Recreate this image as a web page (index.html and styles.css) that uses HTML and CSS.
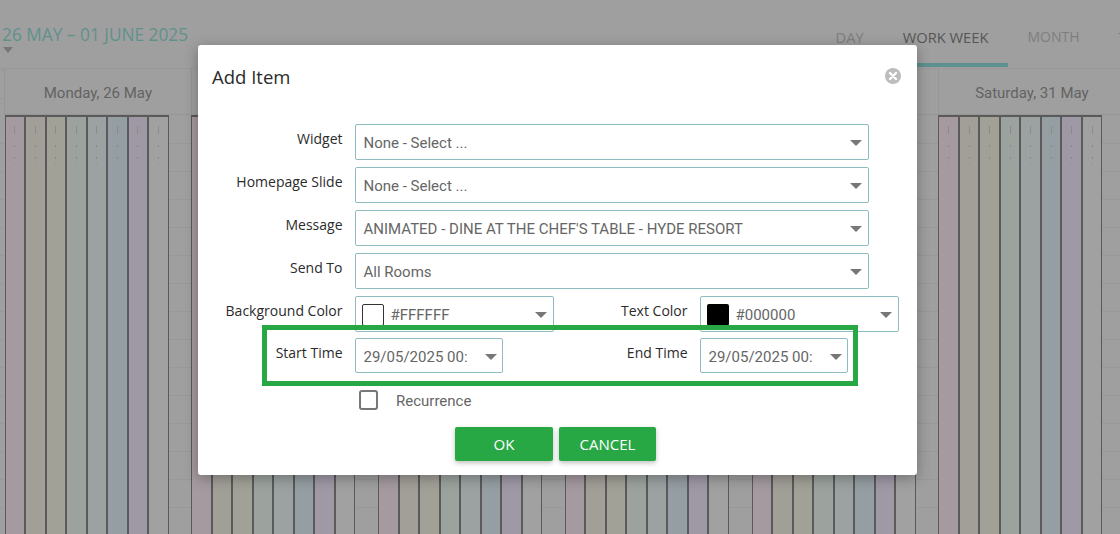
FILE: index.html
```html
<!DOCTYPE html>
<html lang="en">
<head>
<meta charset="utf-8">
<title>Add Item</title>
<link rel="stylesheet" href="styles.css">
</head>
<body>
<div class="page">
  <header class="topbar">
    <div class="range">
      <span class="range-text">26 MAY – 01 JUNE 2025</span>
      <span class="range-caret"></span>
    </div>
    <nav class="tabs">
      <span class="tab">DAY</span>
      <span class="tab tab-active">WORK WEEK</span>
      <span class="tab tab-month">MONTH</span>
      <span class="tab">TIMELINE</span>
    </nav>
  </header>
  <section class="week">
    <div class="day-head">Monday, 26 May</div>
    <div class="day-head"></div>
    <div class="day-head"></div>
    <div class="day-head"></div>
    <div class="day-head"></div>
    <div class="day-head">Saturday, 31 May</div>
    <div class="day"><i class="s s1"></i><i class="s s2"></i><i class="s s3"></i><i class="s s4"></i><i class="s s5"></i><i class="s s6"></i><i class="s s7"></i><i class="s s8"></i></div>
    <div class="day"><i class="s s1"></i><i class="s s2"></i><i class="s s3"></i><i class="s s4"></i><i class="s s5"></i><i class="s s6"></i><i class="s s7"></i><i class="s s8"></i></div>
    <div class="day"><i class="s s1"></i><i class="s s2"></i><i class="s s3"></i><i class="s s4"></i><i class="s s5"></i><i class="s s6"></i><i class="s s7"></i><i class="s s8"></i></div>
    <div class="day"><i class="s s1"></i><i class="s s2"></i><i class="s s3"></i><i class="s s4"></i><i class="s s5"></i><i class="s s6"></i><i class="s s7"></i><i class="s s8"></i></div>
    <div class="day"><i class="s s1"></i><i class="s s2"></i><i class="s s3"></i><i class="s s4"></i><i class="s s5"></i><i class="s s6"></i><i class="s s7"></i><i class="s s8"></i></div>
    <div class="day"><i class="s s1"></i><i class="s s2"></i><i class="s s3"></i><i class="s s4"></i><i class="s s5"></i><i class="s s6"></i><i class="s s7"></i><i class="s s8"></i></div>
  </section>

  <div class="modal">
    <div class="modal-head">
      <h2 class="modal-title">Add Item</h2>
      <svg class="close" viewBox="0 0 16 16" width="16" height="16" aria-label="Close">
        <circle cx="8" cy="8" r="8" fill="#bdbdbd"/>
        <path d="M5 5l6 6M11 5l-6 6" stroke="#fff" stroke-width="2.4" stroke-linecap="round"/>
      </svg>
    </div>
    <form class="form">
      <div class="row">
        <label class="label">Widget</label>
        <div class="select select-full"><span class="value">None - Select ...</span><span class="caret"></span></div>
      </div>
      <div class="row">
        <label class="label">Homepage Slide</label>
        <div class="select select-full"><span class="value">None - Select ...</span><span class="caret"></span></div>
      </div>
      <div class="row">
        <label class="label">Message</label>
        <div class="select select-full"><span class="value">ANIMATED - DINE AT THE CHEF'S TABLE - HYDE RESORT</span><span class="caret"></span></div>
      </div>
      <div class="row">
        <label class="label">Send To</label>
        <div class="select select-full"><span class="value">All Rooms</span><span class="caret"></span></div>
      </div>
      <div class="row row-split">
        <label class="label">Background Color</label>
        <div class="select select-half"><span class="swatch swatch-white"></span><span class="value">#FFFFFF</span><span class="caret"></span></div>
        <label class="label">Text Color</label>
        <div class="select select-half"><span class="swatch swatch-black"></span><span class="value">#000000</span><span class="caret"></span></div>
      </div>
      <div class="row row-split row-time">
        <label class="label">Start Time</label>
        <div class="select select-time"><span class="value">29/05/2025 00:</span><span class="caret"></span></div>
        <label class="label">End Time</label>
        <div class="select select-time"><span class="value">29/05/2025 00:</span><span class="caret"></span></div>
      </div>
      <div class="recurrence">
        <span class="checkbox"></span>
        <span class="recurrence-text">Recurrence</span>
      </div>
      <div class="actions">
        <button type="button" class="btn btn-ok">OK</button>
        <button type="button" class="btn btn-cancel">CANCEL</button>
      </div>
    </form>
    <div class="highlight"></div>
  </div>
</div>
</body>
</html>
```
FILE: styles.css
```css
* { box-sizing: border-box; }
html, body { margin: 0; padding: 0; }
body {
  width: 1120px;
  height: 534px;
  overflow: hidden;
  background: #9f9f9f;
  font-family: "Roboto", "Liberation Sans", sans-serif;
}
.page {
  position: relative;
  width: 1120px;
  height: 534px;
  overflow: hidden;
  background: #9f9f9f;
}

/* top bar */
.topbar {
  display: flex;
  justify-content: space-between;
  height: 69px;
  border-bottom: 1px solid #999;
  white-space: nowrap;
}
.range {
  display: flex;
  flex-direction: column;
  padding: 23px 0 0 2px;
}
.range-text {
  font-family: "Open Sans", sans-serif;
  font-size: 17.3px;
  line-height: 23px;
  color: #5f918c;
}
.range-caret {
  width: 0;
  height: 0;
  margin: 1px 0 0 1px;
  border-left: 5px solid transparent;
  border-right: 5px solid transparent;
  border-top: 6px solid #777;
}
.tabs {
  display: flex;
  flex: none;
  width: 304px;
  height: 68px;
  overflow: hidden;
}
.tab {
  flex: none;
  height: 68px;
  padding: 27px 19.5px 0;
  font-family: "Open Sans", sans-serif;
  font-size: 14.7px;
  line-height: 20px;
  color: #7e7e7e;
}
.tab-active {
  color: #565656;
  border-bottom: 4px solid #5c928d;
  height: 67px;
}
.tab-month {
  font-size: 14px;
}

/* calendar */
.week {
  display: grid;
  grid-template-columns: repeat(6, 186.8px);
  grid-template-rows: 46px 1fr;
  height: 465px;
  padding-left: 4px;
  background-image: repeating-linear-gradient(to bottom, transparent 0, transparent 27px, #989898 27px, #989898 28px);
  background-position: 0 47px;
}
.day-head {
  display: flex;
  align-items: center;
  justify-content: center;
  padding-top: 2px;
  background: #9f9f9f;
  border-left: 1px solid #969696;
  border-bottom: 1px solid #969696;
  font-size: 15px;
  white-space: nowrap;
  color: #636363;
}
.day {
  display: flex;
  padding-left: 0.5px;
  min-height: 0;
}
.s {
  display: block;
  width: 20.5px;
  border: 1px solid #5a5a5a;
  border-width: 2px 1px 0;
  background-repeat: no-repeat;
  background-image:
    linear-gradient(#8b8b8b, #8b8b8b),
    linear-gradient(#888, #888),
    linear-gradient(#888, #888),
    linear-gradient(#8e8e8e, #8e8e8e);
  background-size: 1px 8px, 1px 2px, 1px 2px, 1px 1px;
  background-position: 50% 9px, 50% 28px, 50% 40px, 50% 46px;
}
.s1 { background-color: #a49a9f; }
.s2 { background-color: #a29e98; }
.s3 { background-color: #a1a198; }
.s4 { background-color: #9ca39e; }
.s5 { background-color: #9ca2a2; }
.s6 { background-color: #959ea3; }
.s7 { background-color: #9f99a6; }
.s8 { background-color: #a1a1a1; }

/* modal */
.modal {
  position: absolute;
  left: 198px;
  top: 45px;
  width: 718.5px;
  height: 430px;
  background: #fff;
  border-radius: 3px;
  box-shadow: 0 3px 14px rgba(0, 0, 0, 0.3);
}
.modal-head {
  display: flex;
  align-items: center;
  justify-content: space-between;
  height: 79px;
  padding: 0 16px 17px 14px;
}
.modal-title {
  margin: 0;
  font-family: "Open Sans", sans-serif;
  font-size: 18.5px;
  font-weight: 400;
  line-height: 25px;
  color: #2b2b2b;
}
.form {
  display: flex;
  flex-direction: column;
  gap: 7px;
}
.row {
  display: flex;
  align-items: flex-start;
  height: 36px;
}
.row-split {
  display: grid;
  grid-template-columns: 144.5px 199px 122px 1fr;
  column-gap: 12px;
}
.row-time {
  height: 35px;
  margin-top: -1px;
}
.label {
  flex: none;
  width: 144.5px;
  margin-right: 12px;
  padding-top: 5px;
  text-align: right;
  font-family: "Open Sans", sans-serif;
  font-size: 14px;
  line-height: 20px;
  color: #2b2b2b;
}
.row-split .label {
  width: auto;
  margin-right: 0;
}
.select {
  position: relative;
  display: flex;
  align-items: center;
  flex: none;
  height: 100%;
  padding: 2px 0 0 8px;
  border: 1px solid #8fbcc0;
  border-radius: 2px;
  background: #fff;
  font-size: 15px;
  color: #666;
}
.select-full { width: 514px; }
.select-half { width: 199px; padding-left: 6px; }
.select-time { width: 148px; }
.value { white-space: nowrap; }
.caret {
  position: absolute;
  right: 6px;
  top: 15px;
  width: 0;
  height: 0;
  border-left: 6px solid transparent;
  border-right: 6px solid transparent;
  border-top: 6px solid #777;
}
.select-time .caret { right: 5px; }
.swatch {
  flex: none;
  width: 22px;
  height: 22px;
  margin-right: 7px;
  border-radius: 2px;
}
.swatch-white { background: #fff; border: 1.5px solid #333; }
.swatch-black { background: #000; }
.recurrence {
  display: flex;
  align-items: center;
  height: 20px;
  margin: 10px 0 0 161px;
}
.checkbox {
  width: 19px;
  height: 20px;
  border: 2px solid #777;
  border-radius: 3px;
  margin-right: 18px;
}
.recurrence-text {
  padding-top: 2px;
  font-size: 15px;
  color: #666;
}
.actions {
  display: flex;
  gap: 6px;
  margin: 10px 0 0 257px;
}
.btn {
  height: 34px;
  padding: 0;
  border: 0;
  border-radius: 2px;
  background: #28a745;
  color: #fff;
  font-family: "Open Sans", sans-serif;
  font-size: 15px;
  box-shadow: 0 2px 5px rgba(0, 0, 0, 0.25);
}
.btn-ok { width: 98px; }
.btn-cancel { width: 97px; }

/* annotation drawn over the form */
.highlight {
  position: absolute;
  left: 64px;
  top: 280px;
  width: 596px;
  height: 61px;
  border: 5px solid #28a745;
  pointer-events: none;
}
.close { flex: none; }
```
